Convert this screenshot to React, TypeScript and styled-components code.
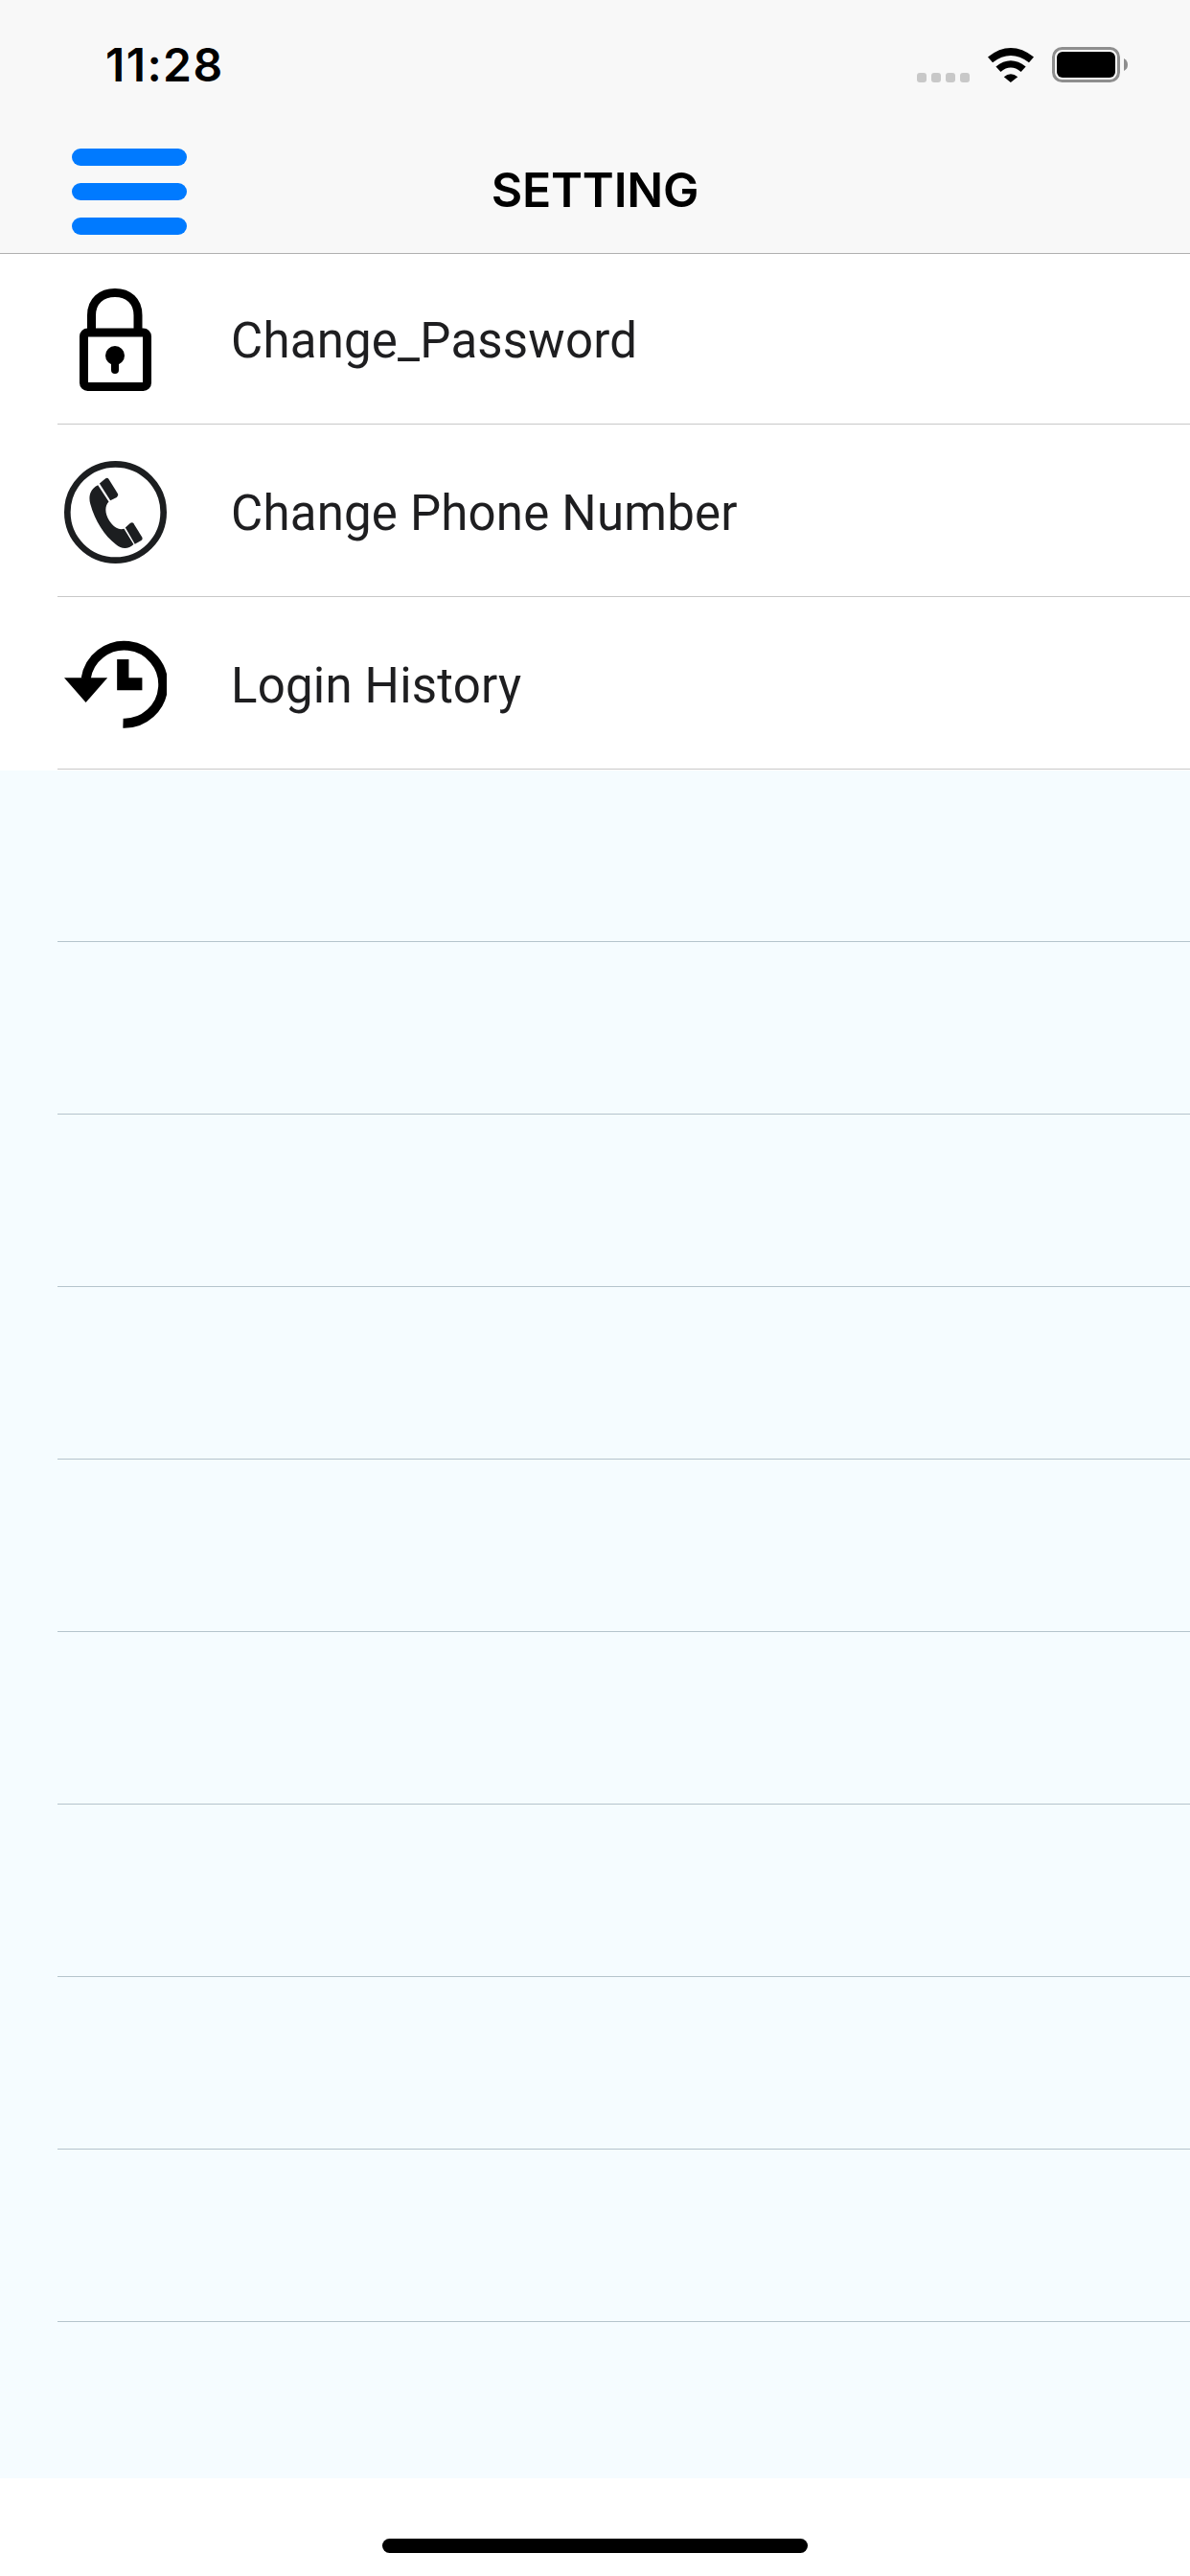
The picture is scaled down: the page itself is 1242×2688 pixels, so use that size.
import React from "react";
import styled, { createGlobalStyle } from "styled-components";

const GlobalStyle = createGlobalStyle`
  html, body {
    margin: 0;
    padding: 0;
    background: #fff;
  }
  * {
    box-sizing: border-box;
  }
`;

const Screen = styled.div`
  width: 1242px;
  height: 2688px;
  display: flex;
  flex-direction: column;
  background: #fff;
  font-family: Inter, "Liberation Sans", sans-serif;
  overflow: hidden;
`;

const Header = styled.header`
  height: 264px;
  flex: none;
  position: relative;
  z-index: 1;
  background: #f8f8f8;
  box-shadow: 0 1px 0 #b0b0b0;
`;

const StatusBar = styled.div`
  height: 132px;
  display: flex;
  align-items: flex-start;
  justify-content: space-between;
  padding: 49px 65px 0 110px;
`;

const Time = styled.span`
  font-size: 48px;
  line-height: 38px;
  font-weight: 600;
  letter-spacing: 1.4px;
  color: #000;
`;

const StatusIcons = styled.div`
  display: flex;
  align-items: flex-end;
  gap: 19px;
`;

const SignalDots = styled.div`
  display: flex;
  gap: 5px;
`;

const SignalDot = styled.span`
  width: 10px;
  height: 10px;
  border-radius: 3px;
  background: #c8c8c8;
`;

const NavBar = styled.div`
  height: 132px;
  display: grid;
  grid-template-columns: 1fr auto 1fr;
  align-items: center;
  padding: 0 75px;
`;

const MenuButton = styled.div`
  width: 120px;
  display: flex;
  flex-direction: column;
  gap: 18px;
  padding-top: 3px;
`;

const MenuBar = styled.span`
  height: 18px;
  border-radius: 9px;
  background: #007aff;
`;

const Title = styled.h1`
  margin: 0;
  font-size: 50px;
  font-weight: 600;
  line-height: 60px;
  letter-spacing: -0.2px;
  color: #000;
`;

const List = styled.div`
  flex: 1;
  background: #f5fcff;
`;

const Row = styled.div<{ $active?: boolean }>`
  height: 180px;
  display: flex;
  align-items: center;
  background: ${(props) => (props.$active ? "#fff" : "transparent")};
  position: relative;
  padding-left: 60px;

  &::after {
    content: "";
    position: absolute;
    left: 60px;
    right: 0;
    bottom: 1px;
    height: 1px;
    background: ${(props) => (props.$active ? "#c8c8c8" : "#b5c4cc")};
  }
`;

const IconSlot = styled.div`
  width: 120px;
  height: 120px;
  flex: none;
  display: flex;
  align-items: center;
  justify-content: center;
`;

const Label = styled.span`
  margin-left: 61px;
  padding-top: 3px;
  font-size: 51px;
  line-height: 60px;
  letter-spacing: 0.2px;
  font-family: Roboto, Inter, sans-serif;
  color: #1e1e20;
`;

const HomeArea = styled.div`
  height: 102px;
  flex: none;
  display: flex;
  justify-content: center;
  padding-top: 63px;
  background: #fff;
`;

const HomeIndicator = styled.span`
  width: 444px;
  height: 15px;
  border-radius: 8px;
  background: #000;
`;

const WifiIcon = () => (
  <svg width="48" height="36" viewBox="395 88 143 107" fill="#000">
    <path d="M395 116 Q466 60 538 116 L523 133 Q466 90 410 133 Z" />
    <path d="M420 146 Q466 108 513 146 L498 162 Q466 136 435 162 Z" />
    <path d="M445 178 Q466 160 488 178 L466 195 Z" />
  </svg>
);

const BatteryIcon = () => (
  <svg width="79" height="37" viewBox="0 0 79 37">
    <rect x="1.5" y="1.5" width="68" height="34" rx="9" fill="none" stroke="#8e8e8e" strokeWidth="3" />
    <rect x="5" y="5" width="61" height="27" rx="6" fill="#000" />
    <path d="M75 12 Q79 14 79 18.5 Q79 23 75 25 Z" fill="#8e8e8e" />
  </svg>
);

const LockIcon = () => (
  <svg width="75" height="107" viewBox="0 0 75 107" fill="none">
    <path d="M12.5 42 V28 C12.5 13 23 4.5 37 4.5 C51 4.5 61 13 61 28 V42" stroke="#000" strokeWidth="9" />
    <rect x="4.5" y="46" width="66" height="56.5" rx="4" stroke="#000" strokeWidth="9" />
    <circle cx="37" cy="70" r="10" fill="#000" />
    <path d="M37 72 V85" stroke="#000" strokeWidth="8" strokeLinecap="round" />
  </svg>
);

const PhoneIcon = () => (
  <svg width="107" height="107" viewBox="78 90 322 322" fill="#1c1e20">
    <circle cx="239" cy="251" r="151" fill="none" stroke="#1c1e20" strokeWidth="20" />
    <path d="M184 166 L218 218 C205 232 205 255 220 278 C232 296 248 308 266 303 L296 352 C280 368 258 368 240 352 C205 325 175 280 160 225 C152 195 165 175 184 166 Z" />
    <path d="M189 161 L208 145 Q214 141 218 147 L246 192 Q249 199 243 204 L223 214 Z" />
    <path d="M270 299 L286 285 Q292 281 296 286 L323 330 Q326 336 320 340 L300 351 Z" />
  </svg>
);

const HistoryIcon = () => (
  <svg width="107" height="92" viewBox="80 115 322 275" fill="#000">
    <path d="M265 375 A122 122 0 1 0 148 235" fill="none" stroke="#000" strokeWidth="30" />
    <path d="M80 232 H216 L148 310 Z" />
    <path d="M246 174 H283 V232 H325 V271 H246 Z" />
  </svg>
);

const settings = [
  { label: "Change_Password", icon: <LockIcon /> },
  { label: "Change Phone Number", icon: <PhoneIcon /> },
  { label: "Login History", icon: <HistoryIcon /> },
];

const App: React.FC = () => {
  return (
    <Screen>
      <GlobalStyle />
      <Header>
        <StatusBar>
          <Time>11:28</Time>
          <StatusIcons>
            <SignalDots>
              {[0, 1, 2, 3].map((dot) => (
                <SignalDot key={dot} />
              ))}
            </SignalDots>
            <WifiIcon />
            <BatteryIcon />
          </StatusIcons>
        </StatusBar>
        <NavBar>
          <MenuButton>
            <MenuBar />
            <MenuBar />
            <MenuBar />
          </MenuButton>
          <Title>SETTING</Title>
        </NavBar>
      </Header>
      <List>
        {settings.map((item) => (
          <Row $active key={item.label}>
            <IconSlot>{item.icon}</IconSlot>
            <Label>{item.label}</Label>
          </Row>
        ))}
        {Array.from({ length: 9 }).map((_, index) => (
          <Row key={index} />
        ))}
      </List>
      <HomeArea>
        <HomeIndicator />
      </HomeArea>
    </Screen>
  );
};

export default App;
